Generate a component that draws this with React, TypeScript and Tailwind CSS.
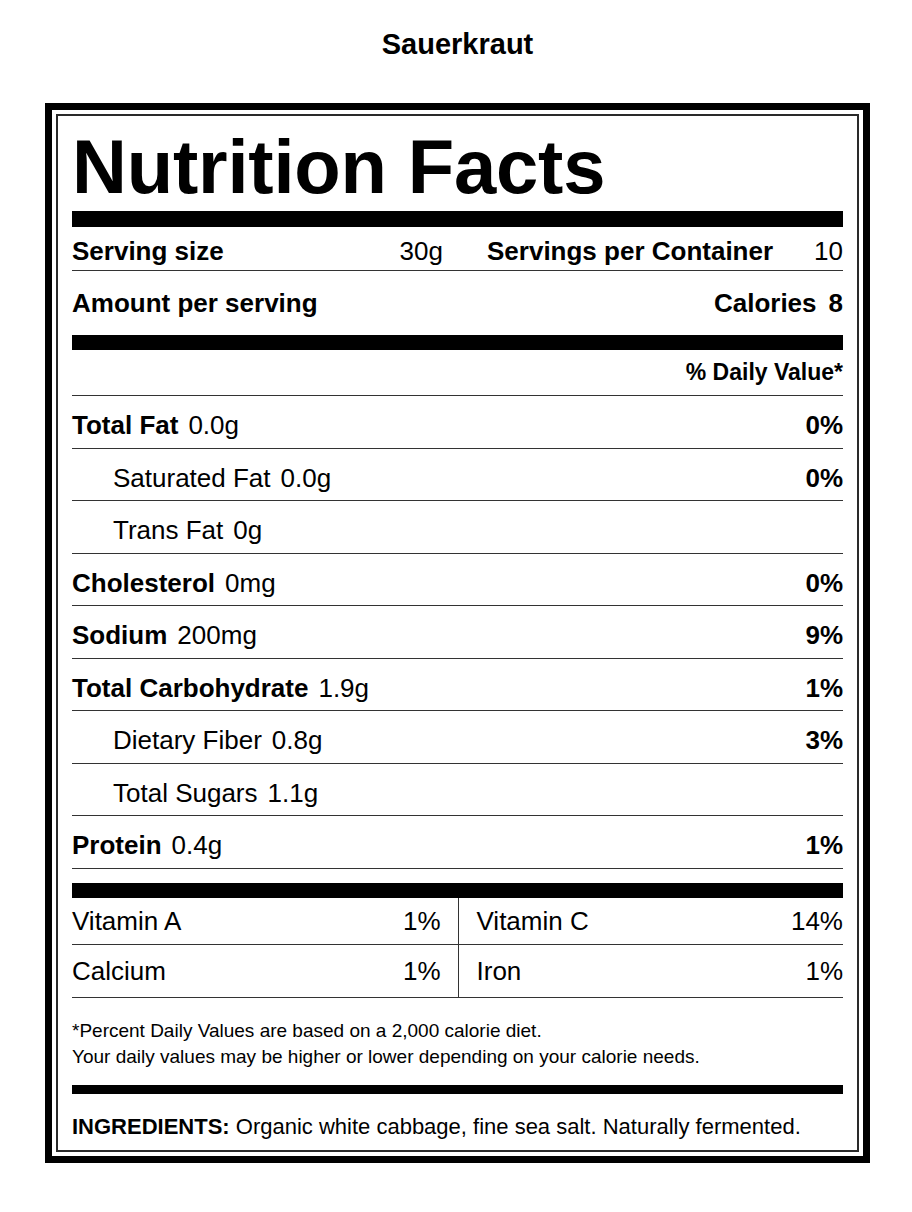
const nutrients = [
  { name: 'Total Fat', amount: '0.0g', dv: '0%', bold: true },
  { name: 'Saturated Fat', amount: '0.0g', dv: '0%', bold: false },
  { name: 'Trans Fat', amount: '0g', dv: '', bold: false },
  { name: 'Cholesterol', amount: '0mg', dv: '0%', bold: true },
  { name: 'Sodium', amount: '200mg', dv: '9%', bold: true },
  { name: 'Total Carbohydrate', amount: '1.9g', dv: '1%', bold: true },
  { name: 'Dietary Fiber', amount: '0.8g', dv: '3%', bold: false },
  { name: 'Total Sugars', amount: '1.1g', dv: '', bold: false },
  { name: 'Protein', amount: '0.4g', dv: '1%', bold: true },
]

const vitamins = [
  [
    { name: 'Vitamin A', dv: '1%' },
    { name: 'Vitamin C', dv: '14%' },
  ],
  [
    { name: 'Calcium', dv: '1%' },
    { name: 'Iron', dv: '1%' },
  ],
]

export default function App() {
  return (
    <div className="min-h-screen bg-white text-black flex flex-col items-center pt-[27px] pl-[3px] pb-10 font-['Liberation_Sans',Arial,sans-serif]">
      <h1 className="text-[29px] font-bold leading-[34px]">Sauerkraut</h1>

      <div className="mt-[42px] w-[825px] border-[7px] border-black p-[4px]">
        <div className="border-2 border-[#2a2a2a] px-[14px] pt-[13px] pb-[10px]">
          {/* Header */}
          <h2 className="text-[76px] font-bold leading-[76px] tracking-[-0.2px]">Nutrition Facts</h2>
          <div className="mt-[6px] h-[16px] bg-black" />

          {/* Serving info */}
          <div className="flex text-[26px] leading-[26px] pt-[11px] pb-[6px] border-b border-[#333]">
            <div className="w-[371px] flex justify-between">
              <span className="font-bold">Serving size</span>
              <span>30g</span>
            </div>
            <div className="ml-auto w-[356px] flex justify-between">
              <span className="font-bold">Servings per Container</span>
              <span>10</span>
            </div>
          </div>

          <div className="flex justify-between text-[26px] leading-[26px] font-bold py-[19px]">
            <span>Amount per serving</span>
            <span className="flex gap-[12px]">
              <span>Calories</span>
              <span>8</span>
            </span>
          </div>
          <div className="h-[15px] bg-black" />

          <div className="h-[46px] flex items-center justify-end border-b border-[#333] text-[23px] font-bold">
            % Daily Value*
          </div>

          {/* Nutrients */}
          {nutrients.map((n) => (
            <div
              key={n.name}
              className="flex justify-between text-[26px] leading-[26px] pt-[16px] pb-[9.5px] border-b border-[#333]"
            >
              <span className={`flex gap-[10px] ${n.bold ? '' : 'pl-[41px]'}`}>
                <span className={n.bold ? 'font-bold' : ''}>{n.name}</span>
                <span>{n.amount}</span>
              </span>
              <span className="font-bold">{n.dv}</span>
            </div>
          ))}

          <div className="mt-[14px] h-[15px] bg-black" />

          {/* Vitamins & minerals */}
          <div className="grid grid-cols-2 text-[26px] leading-[26px]">
            {vitamins.map((row, i) =>
              row.map((v, j) => (
                <div
                  key={v.name}
                  className={`flex items-center justify-between border-b border-[#333] ${
                    i === 0 ? 'h-[47px]' : 'h-[53px]'
                  } ${j === 0 ? 'pr-[17px]' : 'border-l pl-[18px]'}`}
                >
                  <span>{v.name}</span>
                  <span>{v.dv}</span>
                </div>
              ))
            )}
          </div>

          {/* Footnote */}
          <div className="pt-[20.5px] text-[19px] leading-[26px]">
            <p>*Percent Daily Values are based on a 2,000 calorie diet.</p>
            <p>Your daily values may be higher or lower depending on your calorie needs.</p>
          </div>
          <div className="mt-[15px] h-[9px] bg-black" />

          <p className="mt-[20px] text-[22px] leading-[26px]">
            <span className="font-bold">INGREDIENTS:</span> Organic white cabbage, fine sea salt. Naturally fermented.
          </p>
        </div>
      </div>
    </div>
  )
}
